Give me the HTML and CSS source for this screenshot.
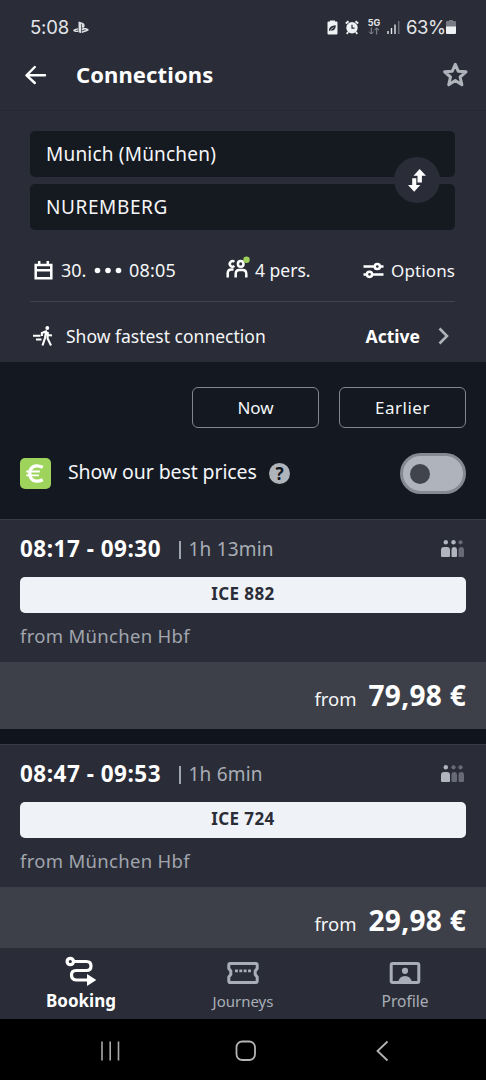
FILE: index.html
```html
<!DOCTYPE html>
<html lang="en">
<head>
<meta charset="utf-8">
<meta name="viewport" content="width=device-width, initial-scale=1">
<title>Connections</title>
<link rel="stylesheet" href="styles.css">
</head>
<body>
<div class="app">
  <header class="header">
    <div class="status">
      <span class="clock">5:08</span>
      <svg class="ps" width="16" height="13" viewBox="0 0 16 13" fill="#dcdee2"><path d="M5.500.6 8.800 1.500C10.900 2.200 11.600 3 11.600 4.800 11.600 6.700 10.500 7.200 9 6.600V3.300C9 2.700 8.300 2.600 8.300 3.200V12.200L5.500 11.300Z"/><path d="M5 7.200V8.500L2.800 9.300C2.200 9.600 3 9.900 3.700 9.700L5 9.300V10.900C3 11.400 0 10.600.2 9.200.4 8.300 3 7.600 5 7.200ZM9 7.400C11.500 6.600 15.500 7.300 15.700 8.700 15.900 9.900 13 10.600 9 11.900V10.300L12.700 9C13.300 8.700 12.600 8.400 12 8.600L9 9.500Z"/></svg>
      <span class="grow"></span>
      <svg class="saver" width="11" height="15" viewBox="0 0 11 15"><path d="M3 1.500V.5H8V1.500H9.500Q10.500 1.500 10.500 2.500V13.500Q10.500 14.500 9.500 14.500H1.500Q.5 14.500.5 13.500V2.500Q.5 1.500 1.500 1.500Z" fill="#f0f1f4"/><path d="M2 10.500C2 7 4.500 6 8.700 5.300 9 9 6.500 11.500 3.300 10.300L2.300 11.300Z" fill="#2a2d37"/><path d="M3.500 9.800 6.700 7.500" stroke="#f0f1f4" stroke-width=".7"/></svg>
      <svg class="alarm" width="14" height="15" viewBox="0 0 14 15" fill="none" stroke="#f0f1f4"><circle cx="7" cy="7.700" r="5.700" fill="#f0f1f4" stroke="none"/><path d="M.8 3.500 3.500 1.300M13.200 3.500 10.500 1.300" stroke-width="2"/><path d="M3.200 12 1.700 13.800M10.800 12 12.300 13.800" stroke-width="1.800"/><path d="M7 4.800V8.200H9.500" stroke="#2a2d37" stroke-width="1.200"/></svg>
      <span class="net"><b>5G</b><svg width="12" height="8" viewBox="0 0 12 8" fill="none" stroke="#8b8e96" stroke-width="1"><path d="M3.300.5V7M1 4.700 3.300 7 5.600 4.700M8.700 7.500V1M6.400 3.300 8.700 1 11 3.300"/></svg></span>
      <svg class="signal" width="13" height="13" viewBox="0 0 13 13"><path d="M1 10V13M4.500 7V13M8 3.500V13" stroke="#e3e5e9" stroke-width="1.400"/><path d="M11.700 0V13" stroke="#6c6f78" stroke-width="1.500"/></svg>
      <span class="percent">63%</span>
      <svg class="battery" width="10" height="14" viewBox="0 0 10 14"><path d="M3 1V0H7V1H9Q10 1 10 2V7H0V2Q0 1 1 1Z" fill="#777a82"/><path d="M0 6.500H10V13Q10 14 9 14H1Q0 14 0 13Z" fill="#f0f1f4"/></svg>
    </div>
    <div class="title-row">
      <svg width="22" height="20" viewBox="0 0 22 20" fill="none" stroke="#fff" stroke-width="2.400" stroke-linecap="round" stroke-linejoin="round"><path d="M9.800 2 1.500 10.300 9.800 18M2 10.200H20"/></svg>
      <h1>Connections</h1>
      <svg width="26" height="26" viewBox="0 0 26 26" fill="none" stroke="#afb4bb" stroke-width="3" stroke-linejoin="round"><path d="M13.300 2.300 16.200 9.200 24 9.800 18.100 15 19.900 22.800 13.300 18.600 6.700 22.800 8.500 15 2.600 9.800 10.300 9.200Z"/></svg>
    </div>
  </header>

  <section class="search">
    <div class="fields">
      <div class="field">Munich (München)</div>
      <div class="field second">NUREMBERG</div>
      <button class="swap" aria-label="Swap"><svg width="18" height="23" viewBox="0 0 18 23" fill="#fff"><path d="M11.700 0 18 6.700H13.900V13.400H9.500V6.700H5.500ZM4.200 9.300H8.300V16H12.300L6.200 22.800 0 16H4.200Z"/></svg></button>
    </div>
    <div class="details">
      <svg width="19" height="19" viewBox="0 0 19 19"><path d="M1.700 4H17.300V17.300H1.700ZM1.700 9.300H17.300M5.200 0V4M13.800 0V4" fill="none" stroke="#fff" stroke-width="2.500"/></svg>
      <span class="date">30.</span>
      <svg class="dots" width="28" height="7" viewBox="0 0 28 7" fill="#fff"><circle cx="3.500" cy="3.500" r="2.800"/><circle cx="14" cy="3.500" r="2.800"/><circle cx="24.500" cy="3.500" r="2.800"/></svg>
      <span class="time">08:05</span>
      <svg class="people" width="24" height="24" viewBox="0 0 24 24" fill="none" stroke="#fff" stroke-width="2.500"><path d="M8.300 5.900A2.700 2.700 0 1 0 8.300 9.900M1.700 21.500V17.500Q1.700 13.500 5.500 13.500H7.500"/><circle cx="14.700" cy="7.900" r="2.800"/><path d="M9.700 21.500V18Q9.700 14 13.300 14H16.700Q20.300 14 20.300 18V21.500"/><circle cx="20.500" cy="3.800" r="3.200" fill="#9ed15c" stroke="none"/></svg>
      <span class="persons">4 pers.</span>
      <svg class="sliders" width="21" height="17" viewBox="0 0 21 17" fill="none" stroke="#fff" stroke-width="2.500"><path d="M.5 4.500H12M17 4.500H20.500M.5 12.500H3.500M9.500 12.500H20.500"/><circle cx="14.300" cy="4.500" r="2.600"/><circle cx="6.500" cy="12.300" r="2.600"/></svg>
      <span class="options">Options</span>
    </div>
    <div class="fastest">
      <svg width="20" height="20" viewBox="0 0 20 20" fill="none" stroke="#fff" stroke-width="2.100"><path d="M0 9.700H7.500M3 13.500H8.500"/><circle cx="14.300" cy="2" r="1.900" fill="#fff" stroke="none"/><path d="M8.900 10V7L13 5.300 15.300 9 19 9.500M13 5.500 12 12 9.500 19.500M14.800 6 14.600 12.500 18 19.500"/></svg>
      <span class="label">Show fastest connection</span>
      <strong>Active</strong>
      <svg class="chev" width="11" height="18" viewBox="0 0 11 18" fill="none" stroke="#afb4bb" stroke-width="2.600"><path d="M1.500 1.500 9 9 1.500 16.500"/></svg>
    </div>
  </section>

  <section class="tools">
    <div class="buttons"><button class="outline">Now</button><button class="outline earlier">Earlier</button></div>
    <div class="best">
      <svg class="euro" width="31" height="31" viewBox="0 0 31 31"><rect width="31" height="31" rx="5" fill="#9ed45b"/><path d="M22.800 9.300C14.500 5.500 9.800 9.500 9.800 15.500S14.500 25.500 22.800 21.700" fill="none" stroke="#fff" stroke-width="3.300"/><path d="M6.300 13.500H19.800M6.300 17.300H19" stroke="#fff" stroke-width="1.800"/></svg>
      <span class="best-label">Show our best prices</span>
      <span class="help">?</span>
      <span class="toggle"><i></i></span>
    </div>
  </section>

  <main class="results">
    <article class="card">
      <div class="trip">
        <div class="times"><b>08:17 - 09:30</b><i class="bar"></i><span>1h 13min</span>
          <svg width="23" height="18" viewBox="0 0 23 18" fill="#b1b5bd"><circle cx="4.800" cy="2.300" r="2.200"/><path d="M0 16V10Q0 7 3 7H6Q9 7 9 10V16Q9 17 8 17H1Q0 17 0 16Z"/><circle cx="12.500" cy="2.300" r="2.200"/><path d="M10.500 16V10Q10.500 7 13.200 7T16 10V16Q16 17 15 17H11.500Q10.500 17 10.500 16Z"/><g fill="#686b75"><circle cx="19.500" cy="2.300" r="2.100"/><path d="M17.500 16V10Q17.500 7 20.200 7T23 10V16Q23 17 22 17H18.500Q17.500 17 17.500 16Z"/></g></svg></div>
        <div class="train">ICE 882</div>
        <p>from München Hbf</p>
      </div>
      <div class="price"><span>from</span><b>79,98 €</b></div>
    </article>
    <article class="card">
      <div class="trip">
        <div class="times"><b>08:47 - 09:53</b><i class="bar"></i><span>1h 6min</span>
          <svg width="23" height="18" viewBox="0 0 23 18" fill="#b1b5bd"><circle cx="4.800" cy="2.300" r="2.200"/><path d="M0 16V10Q0 7 3 7H6Q9 7 9 10V16Q9 17 8 17H1Q0 17 0 16Z"/><g fill="#686b75"><circle cx="12.500" cy="2.300" r="2.100"/><path d="M10.500 16V10Q10.500 7 13.200 7T16 10V16Q16 17 15 17H11.500Q10.500 17 10.500 16Z"/><circle cx="19.500" cy="2.300" r="2.100"/><path d="M17.500 16V10Q17.500 7 20.200 7T23 10V16Q23 17 22 17H18.500Q17.500 17 17.500 16Z"/></g></svg></div>
        <div class="train">ICE 724</div>
        <p>from München Hbf</p>
      </div>
      <div class="price"><span>from</span><b>29,98 €</b></div>
    </article>
  </main>

  <nav class="tabs">
    <a class="tab active">
      <svg width="32" height="30" viewBox="0 0 32 30" fill="none" stroke="#fff" stroke-width="3.200"><circle cx="5.300" cy="5.500" r="3.200"/><path d="M9 5.500H21.500Q26 5.500 26 10T21.500 14.500H11Q6.500 14.500 6.500 19T11 24H22"/><path d="M22 18 31.300 24 22 30Z" fill="#fff" stroke="none"/></svg>
      <span>Booking</span></a>
    <a class="tab">
      <svg width="32" height="30" viewBox="0 0 32 30" fill="none" stroke="#a9adb8" stroke-width="3"><path d="M3.200 7.500H28.800Q30.200 7.500 30.200 9V12.500L28.200 15V18.500L30.200 21V25Q30.200 26.500 28.800 26.500H3.200Q1.800 26.500 1.800 25V21L3.800 18.500V15L1.800 12.500V9Q1.800 7.500 3.200 7.500Z"/><path d="M8 14.800H24" stroke-width="2.800" stroke-dasharray="2.900 1.450"/></svg>
      <span>Journeys</span></a>
    <a class="tab">
      <svg width="32" height="30" viewBox="0 0 32 30" fill="#a9adb8"><rect x="2.200" y="7.500" width="27.600" height="19" rx="1.500" fill="none" stroke="#a9adb8" stroke-width="3"/><circle cx="16" cy="14.800" r="3.100"/><path d="M9 26Q10.500 20 16 20T23 26Z"/></svg>
      <span>Profile</span></a>
  </nav>
  <footer class="system">
    <svg width="19" height="20" viewBox="0 0 19 20"><path d="M1 .5V19.500M9.200.5V19.500M17.500.5V19.500" stroke="#aaa" stroke-width="1.600"/></svg>
    <svg class="home" width="22" height="22" viewBox="0 0 22 22"><rect x="1.500" y="1.500" width="18.500" height="18.500" rx="5.800" fill="none" stroke="#b5b5b5" stroke-width="1.800"/></svg>
    <svg width="13" height="22" viewBox="0 0 13 22"><path d="M11.500 1.500 1.500 11 11.500 20.500" fill="none" stroke="#b5b5b5" stroke-width="1.800"/></svg>
  </footer>
</div>
</body>
</html>
```

FILE: styles.css
```css
* { box-sizing: border-box; }
body { margin: 0; background: #131821; }
button { padding: 0; border: 0; color: inherit; font: inherit; }
svg { display: block; flex: none; }
.app { display: flex; flex-direction: column; width: 486px; height: 1080px; overflow: hidden; color: #f5f6f8; font-family: "Noto Sans", sans-serif; white-space: nowrap; }
.grow { flex: 1; }

.header { height: 111px; flex: none; padding: 14px 18px 0 25px; background: #2a2d37; border-bottom: 1px solid #262932; }
.status { display: flex; align-items: center; height: 26px; padding: 0 12px 0 5px; color: #e3e5e9; }
.clock, .percent { font: 18.500px/26px Inter, sans-serif; }
.clock { width: 43px; letter-spacing: -.2px; }
.percent { width: 38px; letter-spacing: -.5px; }
.saver { margin-right: 7px; }
.alarm { margin-right: 8px; }
.net { display: flex; flex-direction: column; align-items: center; width: 14px; margin-right: 6px; }
.net b { font: 700 9px/8px Inter, sans-serif; }
.signal { margin-right: 6px; }
.battery { margin-left: 2px; }
.title-row { display: flex; align-items: center; height: 30px; margin-top: 20px; }
.title-row h1 { flex: 1; margin: -2px 0 0 29px; font-size: 22px; line-height: 30px; font-weight: 700; letter-spacing: .1px; color: #fff; }

.search { height: 251px; flex: none; padding: 20px 31px 0 30px; background: #2a2d37; }
.fields { position: relative; display: flex; flex-direction: column; gap: 7px; }
.field { height: 46px; padding-left: 16px; border-radius: 5px; background: #151920; font-size: 19px; line-height: 47px; letter-spacing: .2px; }
.second { letter-spacing: .6px; }
.swap { position: absolute; right: 15px; top: 26px; width: 46px; height: 46px; display: flex; align-items: center; justify-content: center; border-radius: 50%; background: #2a2d37; }
.details { display: flex; align-items: center; height: 72px; padding-left: 4px; padding-top: 9px; font-size: 17.500px; border-bottom: 1px solid #41444d; }
.date { width: 33px; margin-left: 8px; font-size: 18px; }
.time { width: 91px; margin-left: 7px; font-size: 18px; letter-spacing: .2px; }
.people { margin: -5px 0 0 6px; }
.persons { flex: 1; margin-left: 5px; }
.sliders { margin-right: 7px; }
.options { font-size: 17px; letter-spacing: .1px; }
.fastest { display: flex; align-items: center; height: 59px; padding: 8px 6px 0 3px; font-size: 17.500px; }
.fastest .label { flex: 1; margin-left: 13px; }
.fastest strong { color: #fff; }
.chev { margin-left: 18px; }

.tools { height: 157px; flex: none; padding: 25px 20px 0; background: #131821; }
.buttons { display: flex; justify-content: flex-end; gap: 20px; }
.outline { width: 127px; height: 41px; border: 1.500px solid #81858e; border-radius: 6px; background: transparent; font-size: 17px; }
.earlier { letter-spacing: .5px; }
.best { display: flex; align-items: center; height: 41px; margin-top: 25px; }
.best-label { width: 201px; margin-left: 17px; font-size: 19.500px; line-height: 38px; letter-spacing: -.1px; margin-top: -3px; }
.help { width: 21px; height: 21px; border-radius: 50%; background: #afb4bb; color: #131821; font-weight: 700; font-size: 17px; line-height: 21px; text-align: center; }
.toggle { display: flex; align-items: center; width: 66px; height: 41px; margin-left: auto; padding-left: 7px; border: 3px solid #858993; border-radius: 21px; background: #afb4bc; }
.toggle i { width: 20px; height: 20px; border-radius: 50%; background: #41444d; }

.results { display: flex; flex-direction: column; gap: 15px; height: 429px; flex: none; overflow: hidden; background: #10141d; }
.card { flex: none; }
.trip { height: 143px; padding: 13px 20px 0; background: #2a2d37; border-top: 1px solid #3a3d47; }
.times { display: flex; align-items: center; height: 32px; color: #a9adb6; font-size: 19px; }
.times b { width: 159px; margin-top: -2px; color: #fff; font-size: 22.500px; letter-spacing: .5px; }
.bar { width: 1.500px; height: 18px; margin-top: 2px; background: #a0a4ad; }
.times span { flex: 1; margin-left: 8px; letter-spacing: .2px; }
.times svg { margin-right: 2px; }
.train { height: 36px; margin-top: 12px; border-radius: 5px; background: #eff2f6; color: #2a2d37; font-size: 17px; line-height: 34px; font-weight: 700; letter-spacing: .4px; text-align: center; }
.trip p { margin: 9px 0 0; color: #a1a5ae; font-size: 18.500px; line-height: 28px; letter-spacing: .3px; }
.price { display: flex; justify-content: flex-end; align-items: baseline; height: 67px; padding: 13px 20px 0; background: #3d4049; }
.price span { font-size: 18.500px; margin-right: 12px; }
.price b { color: #fff; font-size: 28px; line-height: 40px; letter-spacing: .3px; }

.tabs { display: grid; grid-template-columns: repeat(3, 1fr); height: 71px; flex: none; background: #2a2d37; }
.tab { display: flex; flex-direction: column; align-items: center; padding-top: 8px; color: #a9adb8; font-size: 15px; }
.tab span { line-height: 24px; margin-top: 3px; }
.tab:last-child { font-size: 15.500px; }
.active { color: #fff; font-size: 17px; font-weight: 700; }
.system { display: flex; align-items: center; flex: 1; padding: 2px 97px 0 101px; justify-content: space-between; background: #000; }
.home { margin-right: 4px; }
```
